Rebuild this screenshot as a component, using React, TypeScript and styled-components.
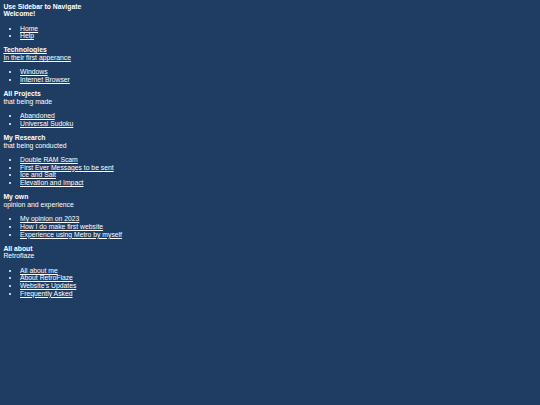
import React from 'react';
import styled, { createGlobalStyle } from 'styled-components';

const GlobalStyle = createGlobalStyle`
  html, body {
    margin: 0;
    padding: 0;
    background: #1f3d63;
  }
  body {
    min-height: 405px;
  }
`;

const Page = styled.div`
  padding: 2.6px 3.4px;
  font-family: "Liberation Sans", Arial, sans-serif;
  font-size: 6.8px;
  line-height: 7.7px;
  color: #ffffff;
`;

const Section = styled.div`
  display: flex;
  flex-direction: column;
`;

const Title = styled.b`
  font-weight: bold;
`;

const TitleLink = styled.a`
  font-weight: bold;
  color: #ffffff;
  text-decoration: underline;
`;

const Sub = styled.span<{ $link?: boolean }>`
  text-decoration: ${p => (p.$link ? 'underline' : 'none')};
`;

const List = styled.ul`
  margin: 6.5px 0;
  padding-left: 16.6px;
  list-style: disc;
`;

const Item = styled.li`
  a {
    color: #ffffff;
    text-decoration: underline;
  }
`;

type Block = {
  title: string;
  sub: string;
  titleLink?: boolean;
  links: string[];
};

const blocks: Block[] = [
  { title: 'Use Sidebar to Navigate', sub: 'Welcome!', links: ['Home', 'Help'] },
  { title: 'Technologies', sub: 'In their first apperance', titleLink: true, links: ['Windows', 'Internet Browser'] },
  { title: 'All Projects', sub: 'that being made', links: ['Abandoned', 'Universal Sudoku'] },
  {
    title: 'My Research',
    sub: 'that being conducted',
    links: ['Double RAM Scam', 'First Ever Messages to be sent', 'Ice and Salt', 'Elevation and Impact'],
  },
  {
    title: 'My own',
    sub: 'opinion and experience',
    links: ['My opinion on 2023', 'How I do make first website', 'Experience using Metro by myself'],
  },
  {
    title: 'All about',
    sub: 'Retroflaze',
    links: ['All about me', 'About RetroFlaze', "Website's Updates", 'Frequently Asked'],
  },
];

export default function App() {
  return (
    <>
      <GlobalStyle />
      <Page>
        {blocks.map((b, i) => (
          <Section key={b.title}>
            {b.titleLink ? <TitleLink href="#">{b.title}</TitleLink> : <Title>{b.title}</Title>}
            {i === 0 ? <Title>{b.sub}</Title> : <Sub $link={b.titleLink}>{b.sub}</Sub>}
            <List>
              {b.links.map(l => (
                <Item key={l}>
                  <a href="#">{l}</a>
                </Item>
              ))}
            </List>
          </Section>
        ))}
      </Page>
    </>
  );
}
